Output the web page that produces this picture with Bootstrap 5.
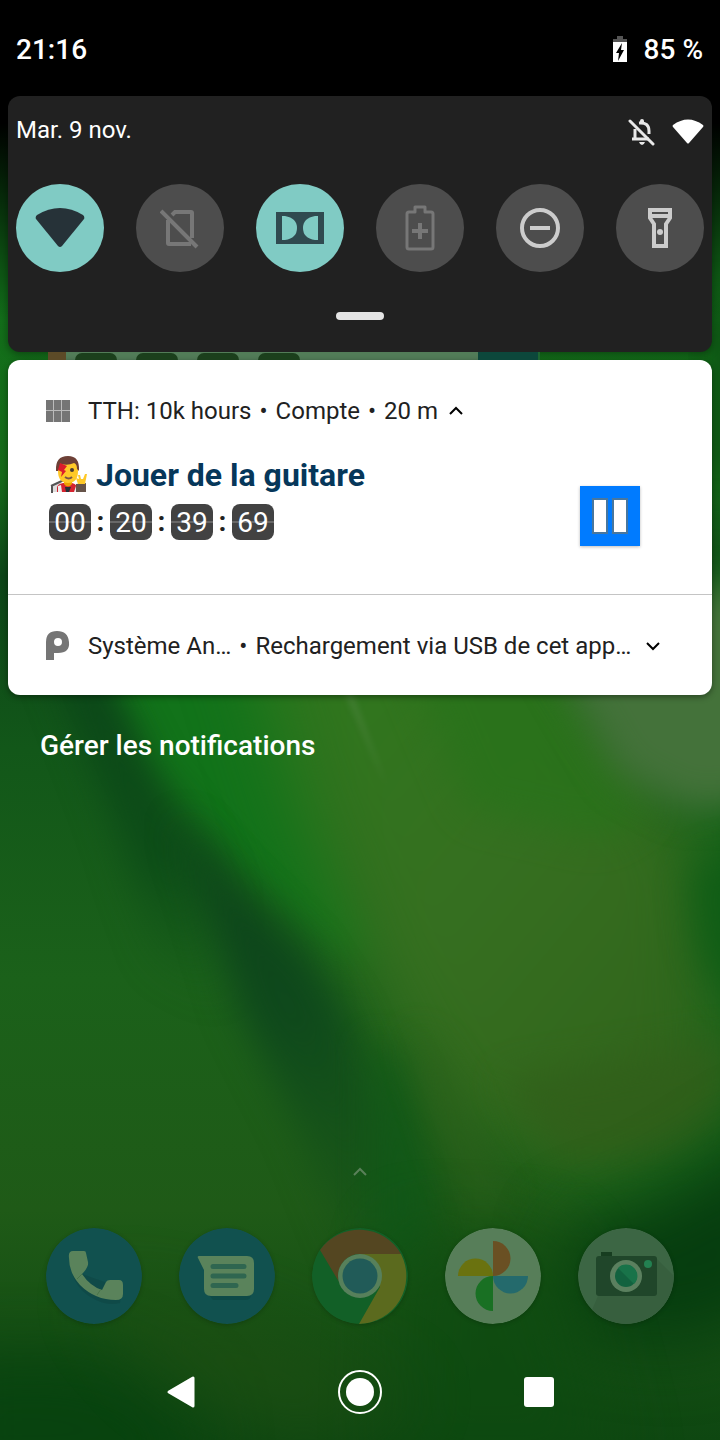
<!DOCTYPE html>
<html lang="fr">
<head>
<meta charset="utf-8">
<meta name="viewport" content="width=device-width, initial-scale=1">
<title>Notifications</title>
<link href="https://cdn.jsdelivr.net/npm/bootstrap@5.3.0/dist/css/bootstrap.min.css" rel="stylesheet">
<style>
  body { font-family: Roboto, "Liberation Sans", sans-serif; font-size: 24px; line-height: 32px; background: #0b4512; color: #212121; }
  svg { display: block; flex: none; }
  button { padding: 0; border: 0; background: none; color: inherit; }
  .wallpaper { position: absolute; inset: 0; width: 100%; height: 100%; z-index: -1; }
  .wallpaper filter { color-interpolation-filters: sRGB; }
  .screen { isolation: isolate; }
  .status { height: 96px; padding: 4px 17px 0 16px; font-size: 28px; font-weight: 500; }
  .shade { margin: 0 8px; }
  .quick { background: #212121; border-radius: 12px; padding: 0 8px 32px; box-shadow: 0 2px 8px #0006; }
  .quick-head { height: 88px; padding-top: 18px; }
  .tile { width: 88px; height: 88px; border-radius: 50%; background: #4d4d4d; display: grid; place-items: center; }
  .tile-on { background: #80cbc4; }
  .handle { width: 48px; height: 8px; border-radius: 4px; background: #e4e4e4; margin: 40px auto 0; }
  .peek { height: 8px; margin: 0 172px 0 40px; background: #527c58; }
  .peek-edge { width: 18px; margin-right: 9px; background: #5c4a27; }
  .peek-digits { gap: 19px; }
  .peek-digit { width: 42px; border-radius: 8px 8px 0 0; margin: 1px 0 0; background: #1b3f1c; }
  .peek-end { width: 62px; background: #0c473b; border-right: 2px solid #1d6630; }
  .notices { background: #fff; border-radius: 12px; box-shadow: 0 2px 6px #0006; }
  .notice-main { padding: 35px 72px 48px 36px; }
  .notice-row { gap: 16px; }
  .notice-body { padding: 28px 0 0 4px; }
  .notice-title { font-size: 32px; line-height: 40px; font-weight: 700; color: #06375a; }
  .notice-sys { height: 101px; border-top: 1px solid #c4c4c4; padding: 2px 36px 0; }
  .timer { font-size: 28px; line-height: 36px; margin: 9px 0 6px 1px; }
  .digits { width: 42px; height: 36px; padding-top: 1px; border-radius: 8px; color: #fff; text-align: center; background: linear-gradient(#424242 17px, #686868 17px, #686868 19px, #424242 19px); }
  .colon { width: 19px; text-align: center; font-weight: 700; }
  .pause { width: 60px; height: 60px; background: #007bff; box-shadow: 0 1px 3px #0004; display: grid; place-items: center; }
  .manage { margin: 33px 0 0 40px; font-size: 28px; line-height: 36px; font-weight: 500; color: #fff; text-decoration: none; align-self: flex-start; }
  .drawer { padding-bottom: 48px; }
  .dock { padding: 0 46px 20px; }
  .dock svg { border-radius: 50%; box-shadow: 0 1px 4px #0003; }
  .navigation { height: 96px; padding: 0 92px; }
</style>
</head>
<body>
<main class="screen position-relative d-flex flex-column min-vh-100 overflow-hidden">

  <svg class="wallpaper" viewBox="0 0 720 1440" preserveAspectRatio="none" aria-hidden="true">
    <defs>
      <filter id="soft" x="-50%" y="-50%" width="200%" height="200%"><feGaussianBlur stdDeviation="34"/></filter>
      <filter id="mid" x="-50%" y="-50%" width="200%" height="200%"><feGaussianBlur stdDeviation="18"/></filter>
      <filter id="fine" x="-30%" y="-30%" width="160%" height="160%"><feGaussianBlur stdDeviation="3"/></filter>
      <linearGradient id="top" x1="0" y1="0" x2="0" y2="1"><stop offset="0" stop-color="#000"/><stop offset=".38" stop-color="#000"/><stop offset="1" stop-color="#000" stop-opacity="0"/></linearGradient>
      <linearGradient id="base" x1="0" y1="0" x2="0" y2="1"><stop offset=".2" stop-color="#12701a"/><stop offset=".33" stop-color="#166a19"/><stop offset=".4" stop-color="#0d4518"/><stop offset=".52" stop-color="#125719"/><stop offset=".68" stop-color="#1b611a"/><stop offset=".84" stop-color="#1f5a17"/><stop offset="1" stop-color="#0e4711"/></linearGradient>
      <linearGradient id="leaf" x1="0" y1="0" x2="1" y2="1"><stop offset="0" stop-color="#2c7a1c"/><stop offset=".5" stop-color="#366f20"/><stop offset="1" stop-color="#2f611a"/></linearGradient>
      <linearGradient id="shadow" gradientUnits="userSpaceOnUse" x1="90" y1="680" x2="200" y2="1010"><stop offset="0" stop-color="#0b4519"/><stop offset=".55" stop-color="#0d4d18"/><stop offset="1" stop-color="#165b1a" stop-opacity="0"/></linearGradient>
      <linearGradient id="fold" gradientUnits="userSpaceOnUse" x1="200" y1="840" x2="400" y2="1240"><stop offset="0" stop-color="#0c431b"/><stop offset=".45" stop-color="#0f491c"/><stop offset="1" stop-color="#165318" stop-opacity=".4"/></linearGradient>
    </defs>
    <rect width="720" height="1440" fill="url(#base)"/>
    <path filter="url(#mid)" d="M712 300H760V480H712z" fill="#0c4d12"/>
    <path filter="url(#soft)" d="M400 560H780V1230L600 1230 420 1000Z" fill="#17631a"/>
    <path filter="url(#mid)" d="M85 640 300 640 390 960 330 950 230 860 150 780Z" fill="#12731a"/>
    <path filter="url(#soft)" d="M235 600 510 600 700 850 720 1110 600 1180 440 1120 370 980 300 810Z" fill="url(#leaf)"/>
    <path filter="url(#mid)" d="M390 620 540 640 650 810 600 840 470 810Z" fill="#27731a" opacity=".7"/>
    <path filter="url(#mid)" d="M530 620 780 580 780 800 690 810 620 775Z" fill="#44723a"/>
    <path filter="url(#mid)" d="M690 870Q715 850 780 850V1010Q710 1010 695 930Z" fill="#0d5c15" opacity=".8"/>
    <path filter="url(#mid)" d="M50 650 95 660 150 770 220 880 230 1010 160 960 115 820Z" fill="url(#shadow)"/>
    <path filter="url(#mid)" d="M180 820 235 885 305 950 350 1020 395 1140 430 1260 350 1260 300 1130 240 1010Z" fill="url(#fold)"/>
    <path filter="url(#mid)" d="M370 1040 405 1060 440 1200 420 1280 370 1240Z" fill="#105818" opacity=".8"/>
    <path filter="url(#mid)" d="M410 1030 445 1060 505 1200 480 1230 450 1160Z" fill="#2b601b" opacity=".8"/>
    <path filter="url(#mid)" d="M500 1080 730 1040 720 1110 670 1150 560 1160Z" fill="#315f1a" opacity=".8"/>
    <path filter="url(#soft)" d="M790 1120 660 1200 570 1230 560 1330 680 1350 800 1300Z" fill="#063d0f"/>
    <path filter="url(#soft)" d="M400 1230 560 1240 620 1480 390 1480Z" fill="#0d4a10" opacity=".7"/>
    <path filter="url(#soft)" d="M-60 1355 90 1355 190 1400 200 1500H-60Z" fill="#08430f"/>
    <path filter="url(#soft)" d="M90 1290 240 1320 420 1400 300 1440 170 1380Z" fill="#204e12" opacity=".6"/>
    <path filter="url(#fine)" d="M344 690 351 690 388 790Z" fill="#5b8a4e" opacity=".45"/>
    <rect width="720" height="320" fill="url(#top)"/>
  </svg>

  <header class="status d-flex justify-content-between align-items-center text-white">
    <time>21:16</time>
    <div class="d-flex align-items-center gap-3">
      <svg width="16" height="28" viewBox="0 0 16 28" aria-hidden="true"><path d="M1 7V3h4V0h6v3h4v4z" fill="#555"/><path d="M1 6h14v20H1z" fill="#fff"/><path d="M10 7 4 17h3l-1 8 6-11H9z" fill="#000"/></svg>
      <span>85&nbsp;%</span>
    </div>
  </header>

  <div class="shade">
    <section class="quick" aria-label="Réglages rapides">
      <div class="quick-head d-flex justify-content-between align-items-start text-white">
        <span>Mar. 9 nov.</span>
        <div class="d-flex gap-3">
          <svg width="28" height="32" viewBox="1 0 28 32" fill="none" stroke="#e8e8e8" stroke-width="3" aria-hidden="true"><path d="M8 15V25M5 25H22M12 9Q22 8 22 17V20"/><path d="M15 8V7" stroke-width="4" stroke-linecap="round"/><path d="M12 28h6q-1 3-3 3t-3-3z" fill="#e8e8e8" stroke="none"/><path d="M3 7 26 30" stroke-linecap="round"/></svg>
          <svg width="32" height="32" viewBox="0 0 32 32" aria-hidden="true"><path d="M1 11Q16 0 31 11q1 1 0 2L17 29q-1 1-2 0L1 13q-1-1 0-2z" fill="#fff"/></svg>
        </div>
      </div>
      <div class="d-flex justify-content-between">
        <button class="tile tile-on" aria-label="Wi-Fi"><svg width="50" height="42" viewBox="0 0 50 42"><path d="M2 8Q25-6 48 8q2 2 1 4L27 39q-2 2-4 0L1 12Q0 10 2 8z" fill="#263238"/></svg></button>
        <button class="tile" aria-label="Données mobiles"><svg width="40" height="42" viewBox="0 0 40 42" fill="none" stroke="#777" stroke-width="4"><path d="M12 8 15 5H31q1 0 1 1V31M8 13V36q0 1 1 1H31"/><path d="M1 4 37 40"/></svg></button>
        <button class="tile tile-on" aria-label="Dolby"><svg width="48" height="32" viewBox="0 0 48 32"><path fill="#304a50" fill-rule="evenodd" d="M0 0H48V32H0zM6 4V28H9Q21 26 21 16T9 4zM42 4V28H39Q27 26 27 16T39 4z"/></svg></button>
        <button class="tile" aria-label="Économiseur de batterie"><svg width="30" height="46" viewBox="-1 0 30 46" fill="none" stroke="#777" stroke-width="3"><path d="M2 7H8V2H18V7H24Q26 7 26 9V42Q26 44 24 44H2Q0 44 0 42V9Q0 7 2 7z" transform="translate(1 0)" stroke-linejoin="round"/><path d="M14 18V34M6 26H22" stroke-width="4"/></svg></button>
        <button class="tile" aria-label="Ne pas déranger"><svg width="40" height="40" viewBox="0 0 40 40" fill="none" stroke="#ccc" stroke-width="4"><circle cx="20" cy="20" r="18"/><path d="M10 20H30"/></svg></button>
        <button class="tile" aria-label="Lampe torche"><svg width="24" height="40" viewBox="0 0 24 40" fill="none" stroke="#ccc" stroke-width="4"><path d="M2 2H22V10L18 16V38H6V16L2 10zM2 8H22"/><circle cx="12" cy="24" r="3" fill="#ccc" stroke="none"/></svg></button>
      </div>
      <div class="handle"></div>
    </section>

    <div class="peek d-flex justify-content-between" aria-hidden="true">
      <div class="d-flex">
        <div class="peek-edge"></div>
        <div class="peek-digits d-flex"><div class="peek-digit"></div><div class="peek-digit"></div><div class="peek-digit"></div><div class="peek-digit"></div></div>
      </div>
      <div class="peek-end"></div>
    </div>

    <section class="notices" aria-label="Notifications">
      <article class="notice-main">
        <div class="notice-row d-flex align-items-center">
          <svg width="28" height="24" viewBox="0 0 28 24" aria-hidden="true"><path d="M2 1h24v22H2z" fill="#bbb"/><path fill="#757575" d="M2 1h7v10H2zM10 1h7v10h-7zM18 1h8v10h-8zM2 12h7v11H2zM10 12h7v11h-7zM18 12h8v11h-8z"/></svg>
          <div class="d-flex gap-2 text-nowrap"><span>TTH: 10k hours</span><span>•</span><span>Compte</span><span>•</span><span>20 m</span>
            <button aria-label="Réduire"><svg width="20" height="20" viewBox="0 0 20 20" fill="none" stroke="#000" stroke-width="2"><path d="M4 13 10 7 16 13"/></svg></button></div>
        </div>
        <div class="notice-body d-flex justify-content-between align-items-end">
          <div>
            <div class="notice-title d-flex gap-2 text-nowrap">
              <svg width="40" height="40" viewBox="0 0 40 40" role="img" aria-label="Chanteur">
                <path d="M3 37V31L12 26 15 37z" fill="#ddd"/><path d="M3 31 16 25M4 31V38" stroke="#555" stroke-width="2"/>
                <path d="M9 37V33Q9 29 15 28H24Q30 29 30 37z" fill="#d5232f"/>
                <path d="M10 37V31L13 30 14 37zM28 31 31 31 28 37H26z" fill="#eee"/><path d="M17 32h6l-2 5h-3z" fill="#263238"/>
                <path d="M28 29 38 28V37H28z" fill="#665349"/>
                <path d="M16 23h8v6q-4 5-8 0z" fill="#ef9f00"/>
                <path d="M10 9Q10 2 20 2T30 10V16Q30 28 20 28T10 16z" fill="#ffc928"/>
                <path d="M8 16Q7 1 20 1Q32 1 31 16L29 14Q29 9 26 8 20 11 13 9L10 16z" fill="#6d4037"/>
                <path d="M12 8 19 11 16 15 18 16 13 22 14 17 10 15z" fill="#dc1c2c"/><path d="M17 22q4 3 7 0" stroke="#795548" stroke-width="2" fill="none"/><circle cx="24" cy="15" r="2" fill="#493931"/>
                <path d="M30 29 28 23 31 24 30 20 32 20 33 24H35L37 19H39L37 29z" fill="#ffc928"/>
              </svg>
              <span>Jouer de la guitare</span>
            </div>
            <div class="timer d-flex" role="timer"><span class="digits">00</span><span class="colon">:</span><span class="digits">20</span><span class="colon">:</span><span class="digits">39</span><span class="colon">:</span><span class="digits">69</span></div>
          </div>
          <button class="pause" aria-label="Pause"><svg width="38" height="38" viewBox="0 0 38 38" fill="#fff" stroke="#48779f" stroke-width="2"><path d="M2 2H16V36H2zM22 2H36V36H22z"/></svg></button>
        </div>
      </article>
      <article class="notice-sys notice-row d-flex align-items-center">
        <svg width="28" height="32" viewBox="0 0 28 32" aria-hidden="true"><path fill="#757575" fill-rule="evenodd" d="M2 30V12Q2 1 13 1T25 12 14 23H10V30zM14 8Q10 8 10 12T14 16 18 12 14 8z"/></svg>
        <div class="d-flex gap-2 text-nowrap"><span>Système An…</span><span>•</span><span>Rechargement via USB de cet app…</span>
          <button class="ms-1" aria-label="Développer"><svg width="20" height="20" viewBox="0 0 20 20" fill="none" stroke="#000" stroke-width="2"><path d="M4 7 10 13 16 7"/></svg></button></div>
      </article>
    </section>
  </div>

  <a class="manage" href="#">Gérer les notifications</a>

  <div class="drawer mt-auto d-flex justify-content-center">
    <svg width="16" height="16" viewBox="0 0 16 16" fill="none" stroke="#5a8059" stroke-width="2" aria-hidden="true"><path d="M2 11 8 5 14 11"/></svg>
  </div>
  <div class="dock d-flex justify-content-between">
    <svg width="96" height="96" viewBox="0 0 96 96" role="img" aria-label="Téléphone"><circle cx="48" cy="48" r="48" fill="#11514f"/><path d="M24 29Q24 60 50 72 62 78 74 75L76 60 36 46 30 26z" fill="#0b403d" opacity=".35"/><path d="M27 23H38Q40 23 40 25L42 34Q43 39 36 46 44 58 56 62L60 54Q61 52 64 52H73Q77 52 77 57V66Q77 72 70 72 49 72 34 57 23 45 23 30 22 23 27 23z" fill="#5a835b"/><path d="m31 51 5-5m15 21 4-6" stroke="#487449" stroke-width="1"/></svg>
    <svg width="96" height="96" viewBox="0 0 96 96" role="img" aria-label="Messages"><circle cx="48" cy="48" r="48" fill="#11514f"/><path d="M30 67H72Q72 72 66 72H34z" fill="#0a403d" opacity=".4"/><path d="M20 28H68Q75 28 75 35V61Q75 68 68 68H32Q25 68 25 61V42L19 30Q18 28 20 28z" fill="#5a835b"/><path d="M34 38.500H65M34 48H65M34 57.500H57" stroke="#2f6650" stroke-width="5" stroke-linecap="round"/></svg>
    <svg width="96" height="96" viewBox="0 0 96 96" role="img" aria-label="Chrome"><circle cx="48" cy="48" r="48" fill="#126027"/><path d="M48 26H89A48 48 0 0 1 47 96L68 59z" fill="#5b6a1e"/><path d="M8 22A48 48 0 0 1 89 26H48A22 22 0 0 0 27 54z" fill="#544621"/><circle cx="48" cy="48" r="22" fill="#57805b"/><circle cx="48" cy="48" r="17.500" fill="#215b58"/></svg>
    <svg width="96" height="96" viewBox="0 0 96 96" role="img" aria-label="Photos"><circle cx="48" cy="48" r="48" fill="#577e59"/><path d="M48 13A17 17 0 0 1 48 48z" fill="#6a5023"/><path d="M48 48H83A17 17 0 0 1 48 48z" fill="#246a6c"/><path d="M48 48V83A17 17 0 0 1 48 48z" fill="#197023"/><path d="M48 48H13A17 17 0 0 1 48 48z" fill="#6a720f"/></svg>
    <svg width="96" height="96" viewBox="0 0 96 96" role="img" aria-label="Appareil photo"><circle cx="48" cy="48" r="48" fill="#3c6644"/><path d="M20 68 14 82A48 48 0 0 0 96 48L78 30z" fill="#375f3e"/><path d="M23 28V24H34V28z" fill="#173d20"/><rect x="18" y="28" width="61" height="40" rx="3" fill="#20462a"/><circle cx="48" cy="48" r="16" fill="#5b805f"/><circle cx="48" cy="48" r="11" fill="#12623f"/><path d="M40 40 56 56A11 11 0 0 0 56 40 11 11 0 0 0 40 40" fill="#187349"/><circle cx="70" cy="36" r="4" fill="#238051"/></svg>
  </div>
  <nav class="navigation row g-0" aria-label="Navigation">
    <button class="col d-flex justify-content-center align-items-center" aria-label="Retour"><svg width="30" height="34" viewBox="0 0 30 34"><path d="M3 17 27 3V31z" fill="#fff" stroke="#fff" stroke-width="3" stroke-linejoin="round"/></svg></button>
    <button class="col d-flex justify-content-center align-items-center" aria-label="Accueil"><svg width="44" height="44" viewBox="0 0 44 44"><circle cx="22" cy="22" r="21" fill="none" stroke="#fff" stroke-width="2"/><circle cx="22" cy="22" r="14" fill="#fff"/></svg></button>
    <button class="col d-flex justify-content-center align-items-center" aria-label="Applications récentes"><svg width="30" height="30" viewBox="0 0 30 30"><rect width="30" height="30" rx="3" fill="#fff"/></svg></button>
  </nav>
</main>
<script src="https://cdn.jsdelivr.net/npm/bootstrap@5.3.0/dist/js/bootstrap.bundle.min.js"></script>
</body>
</html>
